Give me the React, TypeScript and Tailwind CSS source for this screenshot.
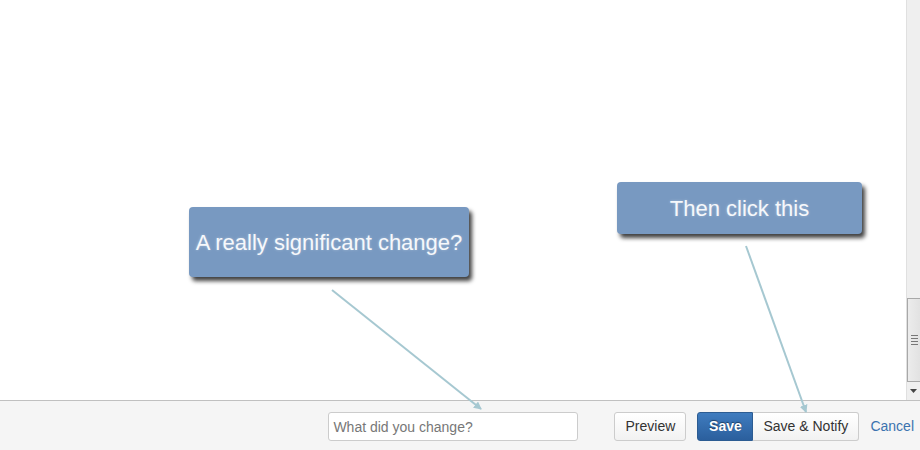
import React from "react";

export default function App() {
  return (
    <div
      className="relative w-[920px] h-[450px] bg-white overflow-hidden flex flex-col"
      style={{ fontFamily: '"Liberation Sans", Arial, sans-serif' }}
    >
      <div className="flex flex-1 min-h-0">
        <div className="relative flex-1">
          <div className="absolute left-[189px] top-[207px] w-[280px] h-[70px] rounded-[4px] bg-[#7899c1] shadow-[3px_4px_4px_rgba(0,0,0,0.75)] flex items-center justify-center">
            <span className="text-[22px] text-[#f6f8fb] [text-shadow:0_0_3px_rgba(255,255,255,0.35)]">
              A really significant change?
            </span>
          </div>
          <div className="absolute left-[617px] top-[182px] w-[245px] h-[52px] rounded-[4px] bg-[#7899c1] shadow-[3px_4px_4px_rgba(0,0,0,0.75)] flex items-center justify-center">
            <span className="text-[22px] text-[#f6f8fb] [text-shadow:0_0_3px_rgba(255,255,255,0.35)]">
              Then click this
            </span>
          </div>
        </div>
        <div className="w-[14px] bg-[#efefef] border-l border-[#e0e0e0] flex flex-col">
          <div className="h-[298px]" />
          <div className="h-[84px] bg-gradient-to-r from-[#ececec] to-[#e2e2e2] border-l border-t border-b border-[#a8a8a8] flex flex-col items-center justify-center gap-[2px]">
            <div className="w-[7px] h-px bg-[#777]" />
            <div className="w-[7px] h-px bg-[#777]" />
            <div className="w-[7px] h-px bg-[#777]" />
            <div className="w-[7px] h-px bg-[#777]" />
          </div>
          <div className="flex-1 flex items-center justify-center">
            <svg width="7" height="4" viewBox="0 0 7 4">
              <polygon points="0,0 7,0 3.5,4" fill="#444" />
            </svg>
          </div>
        </div>
      </div>
      <div className="h-[50px] bg-[#f5f5f5] border-t border-[#c0c0c0] flex items-start justify-end pt-[11px] pr-[6px] text-[14px]">
        <input
          className="w-[250px] h-[29px] border border-[#cccccc] rounded-[3px] bg-white pl-[4px] text-[14px] text-[#333] placeholder:text-[#777] outline-none"
          placeholder="What did you change?"
        />
        <button className="ml-[36px] w-[72px] h-[29px] rounded-[3px] border border-[#cccccc] bg-gradient-to-b from-white to-[#f2f2f2] text-[#333]">
          Preview
        </button>
        <div className="ml-[11px] flex">
          <button className="w-[56px] h-[29px] rounded-l-[3px] border border-[#2c5c92] bg-gradient-to-b from-[#3f7cbf] to-[#2b5f9d] text-white font-bold [text-shadow:0_-1px_1px_rgba(0,0,0,0.45)]">
            Save
          </button>
          <button className="w-[106px] h-[29px] rounded-r-[3px] border border-l-0 border-[#cccccc] bg-gradient-to-b from-white to-[#f2f2f2] text-[#333]">
            Save &amp; Notify
          </button>
        </div>
        <span className="ml-[11px] h-[29px] leading-[29px] text-[#3b73af]">Cancel</span>
      </div>
      <svg
        className="absolute left-0 top-0 pointer-events-none"
        width="920"
        height="450"
        viewBox="0 0 920 450"
      >
        <defs>
          <marker id="ah" markerWidth="8" markerHeight="8" refX="7" refY="4" orient="auto" markerUnits="userSpaceOnUse">
            <polygon points="0,0 8,4 0,8" fill="#a6c8d1" />
          </marker>
        </defs>
        <line x1="332" y1="290" x2="481" y2="409" stroke="#a6c8d1" strokeWidth="2" markerEnd="url(#ah)" />
        <line x1="746" y1="246" x2="806" y2="412" stroke="#a6c8d1" strokeWidth="2" markerEnd="url(#ah)" />
      </svg>
    </div>
  );
}
